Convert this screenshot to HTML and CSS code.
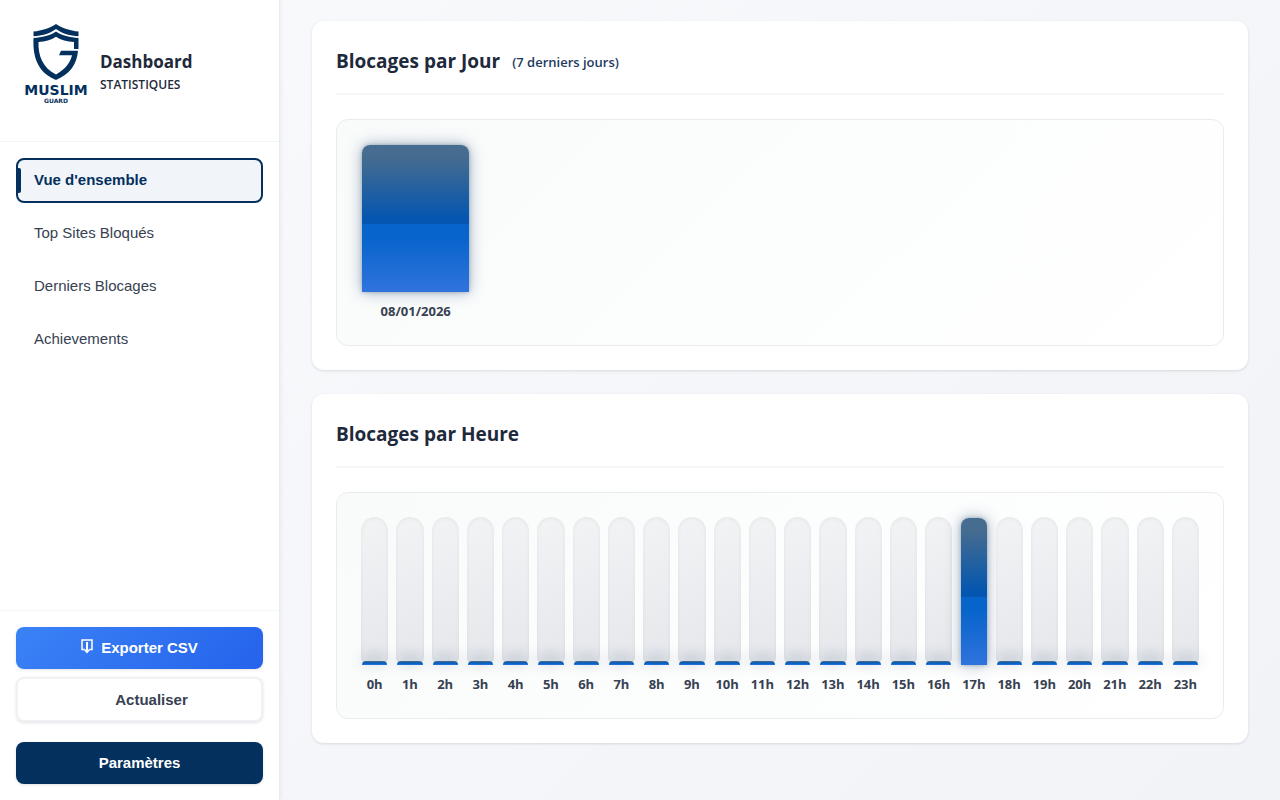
FILE: index.html
```html
<!DOCTYPE html>
<html lang="fr">
<head>
    <meta charset="UTF-8">
    <meta name="viewport" content="width=device-width, initial-scale=1.0">
    <title>Muslim Guard - Dashboard</title>
    <link rel="stylesheet" href="styles.css">
</head>
<body>
    <aside class="sidebar">
        <div class="sidebar-header">
            <svg class="logo" viewBox="0 0 64 80" role="img" aria-label="Muslim Guard">
                <g fill="#03305c">
                    <path d="M32 0 C38 4 46 6.800 54.500 7.500 V12.300 C46 11.800 38 9.500 32 5 C26 9.500 18 11.800 9.500 12.300 V7.500 C18 6.800 26 4 32 0 Z"/>
                    <path d="M32 7.500 C38 11.800 46 13.300 54.500 14 V25 H50 V18 C43 17.500 37 16 32 12.700 C27 16 21 17.500 14.500 18 C14 32 19 44 32 50.500 C42 45 46.500 38 48 31.300 H35 L37 26.700 H54 C53 40 46 50 32 56 C15 49 8.500 35 9.500 14 C18 13.300 26 11.800 32 7.500 Z"/>
                    <text class="logo-name" x="32" y="71">MUSLIM</text>
                    <text class="logo-sub" x="32" y="79">GUARD</text>
                </g>
            </svg>
            <div class="brand">
                <h1>Dashboard</h1>
                <p>STATISTIQUES</p>
            </div>
        </div>

        <nav class="nav">
            <button class="nav-item active" type="button">Vue d'ensemble</button>
            <button class="nav-item" type="button">Top Sites Bloqués</button>
            <button class="nav-item" type="button">Derniers Blocages</button>
            <button class="nav-item" type="button">Achievements</button>
        </nav>

        <div class="sidebar-footer">
            <button class="btn btn-primary" type="button">
                <svg class="btn-icon" viewBox="0 0 12 16" aria-hidden="true">
                    <path d="M3.500 10.500 H1 V1 H11 V10.500 H8.500" fill="none" stroke="#fff" stroke-width="1.500"/>
                    <path d="M6 3 V12" stroke="#fff" stroke-width="2"/>
                    <path d="M2.500 10.500 H9.500 L6 14.500 Z" fill="#fff"/>
                </svg>
                Exporter CSV
            </button>
            <button class="btn btn-secondary" type="button"><span class="btn-spacer"></span>Actualiser</button>
            <button class="btn btn-dark" type="button">Paramètres</button>
        </div>
    </aside>

    <main class="content">
        <section class="card">
            <div class="card-header">
                <h2>Blocages par Jour</h2>
                <span class="subtitle">(7 derniers jours)</span>
            </div>
            <div class="chart chart-days" id="chartDays"></div>
        </section>

        <section class="card">
            <div class="card-header">
                <h2>Blocages par Heure</h2>
            </div>
            <div class="chart chart-hours" id="chartHours"></div>
        </section>
    </main>

    <script src="script.js"></script>
</body>
</html>
```
FILE: styles.css
```css
* {
    box-sizing: border-box;
}
body {
    margin: 0;
    min-height: 100vh;
    display: flex;
    font-family: 'Segoe UI', 'Open Sans', sans-serif;
    color: #1e293b;
    background: linear-gradient(135deg, #f8fafc 0%, #f1f3f7 100%);
}
h1, h2, p {
    margin: 0;
}

/* Sidebar */
.sidebar {
    width: 280px;
    flex-shrink: 0;
    display: flex;
    flex-direction: column;
    height: 100vh;
    position: sticky;
    top: 0;
    background: #fff;
    border-right: 1px solid #e9ebef;
    box-shadow: 1px 0 4px rgba(15, 23, 42, 0.06);
}
.sidebar-header {
    display: flex;
    align-items: flex-start;
    gap: 12px;
    padding: 24px 24px 37px;
    border-bottom: 1px solid #f1f3f5;
}
.logo {
    width: 64px;
    height: 80px;
    overflow: visible;
}
.logo-name,
.logo-sub {
    font-family: 'DejaVu Sans', sans-serif;
    font-weight: bold;
    text-anchor: middle;
}
.logo-name {
    font-size: 14px;
}
.logo-sub {
    font-size: 6px;
}
.brand {
    padding-top: 24px;
}
.brand h1 {
    font-size: 17px;
    line-height: 27px;
    font-weight: 700;
}
.brand p {
    font-size: 12px;
    line-height: 20px;
    font-weight: 600;
}
.nav {
    flex: 1;
    display: flex;
    flex-direction: column;
    gap: 8px;
    padding: 16px;
}
.nav-item {
    position: relative;
    height: 45px;
    padding: 0 16px 2px;
    border: 2px solid transparent;
    border-radius: 8px;
    background: none;
    color: #374151;
    font: 15px 'Liberation Sans', Arial, sans-serif;
    text-align: left;
    cursor: pointer;
}
.nav-item.active {
    border-color: #03305c;
    background: #f1f4f9;
    color: #03305c;
    font-weight: bold;
}
.nav-item.active::before {
    content: '';
    position: absolute;
    left: -2px;
    top: 8px;
    width: 5px;
    height: 25px;
    border-radius: 0 2px 2px 0;
    background: #03305c;
}
.sidebar-footer {
    display: flex;
    flex-direction: column;
    gap: 8px;
    padding: 16px;
    border-top: 1px solid #f5f6f8;
}
.btn {
    display: flex;
    align-items: center;
    justify-content: center;
    gap: 8px;
    height: 42px;
    padding: 0 8px 1px;
    border: none;
    border-radius: 8px;
    font: bold 15px 'Liberation Sans', Arial, sans-serif;
    color: #fff;
    box-shadow: 0 1px 3px rgba(15, 23, 42, 0.12);
    cursor: pointer;
}
.btn-primary {
    background: linear-gradient(135deg, #3b82f6 0%, #2563eb 100%);
}
.btn-secondary {
    height: 45px;
    border: 2px solid #f0f1f4;
    background: #fff;
    color: #374151;
}
.btn-dark {
    margin-top: 12px;
    background: #03305c;
}
.btn-icon {
    width: 12px;
    height: 16px;
    margin-bottom: 2px;
}
.btn-spacer {
    width: 16px;
}

/* Content */
.content {
    flex: 1;
    min-width: 0;
    display: flex;
    flex-direction: column;
    gap: 24px;
    padding: 21px 32px;
}
.card {
    padding: 24px;
    border-radius: 12px;
    background: #fff;
    box-shadow: 0 1px 3px rgba(15, 23, 42, 0.12);
}
.card-header {
    display: flex;
    align-items: center;
    gap: 12px;
    padding-bottom: 15px;
    margin-bottom: 24px;
    border-bottom: 2px solid #f5f6f8;
}
.card-header h2 {
    font-size: 19px;
    line-height: 33px;
    font-weight: 700;
}
.subtitle {
    font-size: 13px;
    line-height: 20px;
    font-weight: 600;
    color: #1e3a5f;
}
.chart {
    display: grid;
    padding: 24px;
    border: 1px solid #e9ecef;
    border-radius: 12px;
    background: linear-gradient(135deg, #f9fbfb 0%, #fff 100%);
}
.chart-days {
    grid-template-columns: repeat(7, minmax(0, 1fr));
    gap: 12px;
}
.chart-hours {
    grid-template-columns: repeat(24, minmax(0, 1fr));
    gap: 8px;
}
.column {
    display: flex;
    flex-direction: column;
    gap: 10px;
}
.track {
    display: flex;
    align-items: flex-end;
    height: 148px;
    padding: 1px 1px 0;
}
.chart-hours .track {
    border-radius: 14px 14px 8px 8px;
    background: linear-gradient(160deg, #f2f3f5 0%, #e5e7eb 100%);
    box-shadow: inset 0 1px 4px rgba(15, 23, 42, 0.06);
}
.chart-hours .track.full {
    background: none;
    box-shadow: none;
}
.bar {
    width: 100%;
    min-height: 4px;
    border-radius: 8px 8px 0 0;
    background: linear-gradient(180deg, #466c8f 0%, #466c8f 8%, #0456b0 50%, #0456b0 54%, #0664cb 54%, #0664cb 62%, #3073dd 100%);
    box-shadow: 0 0 16px rgba(3, 48, 92, 0.35), 0 0 4px rgba(3, 48, 92, 0.3);
}
.bar.empty {
    border-radius: 4px 4px 0 0;
    box-shadow: 0 -3px 14px rgba(3, 48, 92, 0.4);
}
.label {
    font-size: 13px;
    line-height: 19px;
    font-weight: 700;
    color: #374151;
    text-align: center;
    white-space: nowrap;
}
```
FILE: script.js
```javascript
const days = [{ label: '08/01/2026', value: 1 }];
const hours = Array.from({ length: 24 }, (_, h) => ({ label: `${h}h`, value: h === 17 ? 1 : 0 }));

function renderChart(id, data) {
    const max = Math.max(...data.map(d => d.value));
    document.getElementById(id).innerHTML = data.map(d => `
        <div class="column">
            <div class="track ${d.value === max ? 'full' : ''}">
                <div class="bar ${d.value ? '' : 'empty'}" style="height: ${d.value / max * 100}%"></div>
            </div>
            <div class="label">${d.label}</div>
        </div>`).join('');
}

renderChart('chartDays', days);
renderChart('chartHours', hours);
```
